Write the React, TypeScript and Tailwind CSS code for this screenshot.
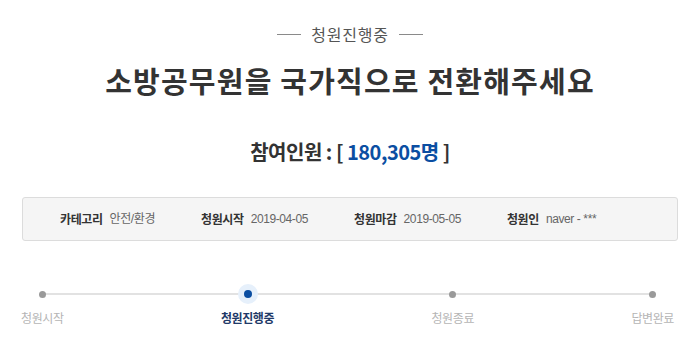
const FONT = "font-['Noto_Sans_CJK_KR','Noto_Sans',sans-serif]";

const infoItems = [
  { label: "카테고리", value: "안전/환경" },
  { label: "청원시작", value: "2019-04-05" },
  { label: "청원마감", value: "2019-05-05" },
  { label: "청원인", value: "naver - ***" },
];

const steps = [
  { label: "청원시작", active: false },
  { label: "청원진행중", active: true },
  { label: "청원종료", active: false },
  { label: "답변완료", active: false },
];

export default function App() {
  return (
    <div className={`${FONT} h-[349px] w-[700px] overflow-hidden bg-white`}>
      {/* status */}
      <div className="flex items-center justify-center gap-[10px] pt-[23px]">
        <span className="h-px w-[24px] bg-[#8a8a8a]" />
        <span className="text-[16px] leading-[22px] tracking-[0.8px] text-[#555]">청원진행중</span>
        <span className="h-px w-[24px] bg-[#8a8a8a]" />
      </div>

      <h1 className="mt-[15px] text-center text-[29px] font-bold leading-[40px] tracking-[1.2px] text-[#333]">
        소방공무원을 국가직으로 전환해주세요
      </h1>

      <p className="mt-[38px] text-center text-[20px] font-bold leading-[28px] tracking-[-0.5px] text-[#333]">
        참여인원 : [ <span className="text-[#0b4ea2]">180,305명</span> ]
      </p>

      <div className="mx-[22px] mt-[31px] flex h-[44px] items-center gap-[46px] rounded-[3px] border border-[#dcdcdc] bg-[#f5f5f5] pl-[37px]">
        {infoItems.map((it) => (
          <div key={it.label} className="flex items-center gap-[7px] text-[12px] tracking-[-0.4px]">
            <span className="font-bold text-[#333]">{it.label}</span>
            <span className="font-['Liberation_Sans','Noto_Sans_CJK_KR',sans-serif] text-[#666]">{it.value}</span>
          </div>
        ))}
      </div>

      {/* progress */}
      <div className="relative ml-[21px] mr-[26px] mt-[43px] flex justify-between">
        <div className="absolute left-[21px] right-[21px] top-[9px] h-[2px] bg-[#e2e2e2]" />
        {steps.map((s) => (
          <div key={s.label} className="relative flex flex-col items-center">
            <div className="flex h-[20px] w-[20px] items-center justify-center">
              {s.active ? (
                <span className="flex h-[20px] w-[20px] items-center justify-center rounded-full bg-[#e6f0fb]">
                  <span className="h-[8px] w-[8px] rounded-full bg-[#0b4ea2]" />
                </span>
              ) : (
                <span className="h-[7px] w-[7px] rounded-full bg-[#9a9a9a]" />
              )}
            </div>
            <span
              className={`mt-[5px] text-[12px] leading-[18px] tracking-[-0.4px] ${
                s.active ? "font-bold text-[#1f3a68]" : "text-[#b5b5b5]"
              }`}
            >
              {s.label}
            </span>
          </div>
        ))}
      </div>
    </div>
  );
}
